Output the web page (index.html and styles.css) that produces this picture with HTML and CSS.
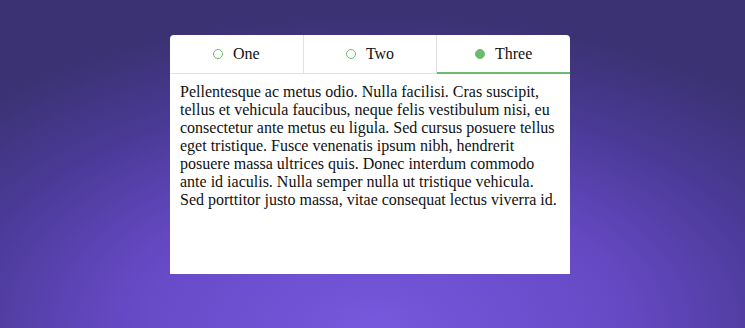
FILE: index.html
```html
<!DOCTYPE html>
<html lang="en">
<head>
    <meta charset="UTF-8">
    <meta name="viewport" content="width=device-width, initial-scale=1.0">
    <title>Tabs</title>
    <link rel="stylesheet" href="styles.css">
</head>
<body>

    <div class="tabs">
        <div class="tab-bar">
            <div class="tab"><span class="dot"></span>One</div>
            <div class="tab"><span class="dot"></span>Two</div>
            <div class="tab active"><span class="dot"></span>Three</div>
        </div>
        <div class="tab-content">
            <p>Pellentesque ac metus odio. Nulla facilisi. Cras suscipit, tellus et vehicula faucibus, neque felis vestibulum nisi, eu consectetur ante metus eu ligula. Sed cursus posuere tellus eget tristique. Fusce venenatis ipsum nibh, hendrerit posuere massa ultrices quis. Donec interdum commodo ante id iaculis. Nulla semper nulla ut tristique vehicula. Sed porttitor justo massa, vitae consequat lectus viverra id.</p>
        </div>
    </div>

</body>
</html>
```

FILE: styles.css
```css
html {
    height: 100%;
}
body {
    margin: 0;
    height: 100%;
    padding-top: 35px;
    box-sizing: border-box;
    font-family: "Liberation Serif", "Times New Roman", serif;
    font-size: 16px;
    color: #111;
    background: radial-gradient(ellipse 75% 95% at 50% 100%, #7659dd 0%, #6549c4 45%, #4a3a96 75%, #3b3274 100%);
}
.tabs {
    width: 400px;
    margin-left: 170px;
    background-color: white;
    border-radius: 4px 4px 0 0;
}
.tab-bar {
    display: flex;
    border-bottom: 1px solid #e2e2e2;
}
.tab {
    flex: 1;
    height: 38px;
    display: flex;
    align-items: center;
    justify-content: center;
    gap: 10px;
    border-right: 1px solid #e2e2e2;
    cursor: pointer;
}
.tab:last-child {
    border-right: none;
}
.tab.active {
    height: 37px;
    border-bottom: 2px solid #6abb6e;
    margin-bottom: -1px;
}
.dot {
    width: 8px;
    height: 8px;
    border: 1px solid #6abb6e;
    border-radius: 50%;
}
.tab.active .dot {
    background-color: #6abb6e;
}
.tab-content {
    height: 200px;
    padding: 9px 10px;
    box-sizing: border-box;
}
.tab-content p {
    margin: 0;
    line-height: 18px;
}
```
